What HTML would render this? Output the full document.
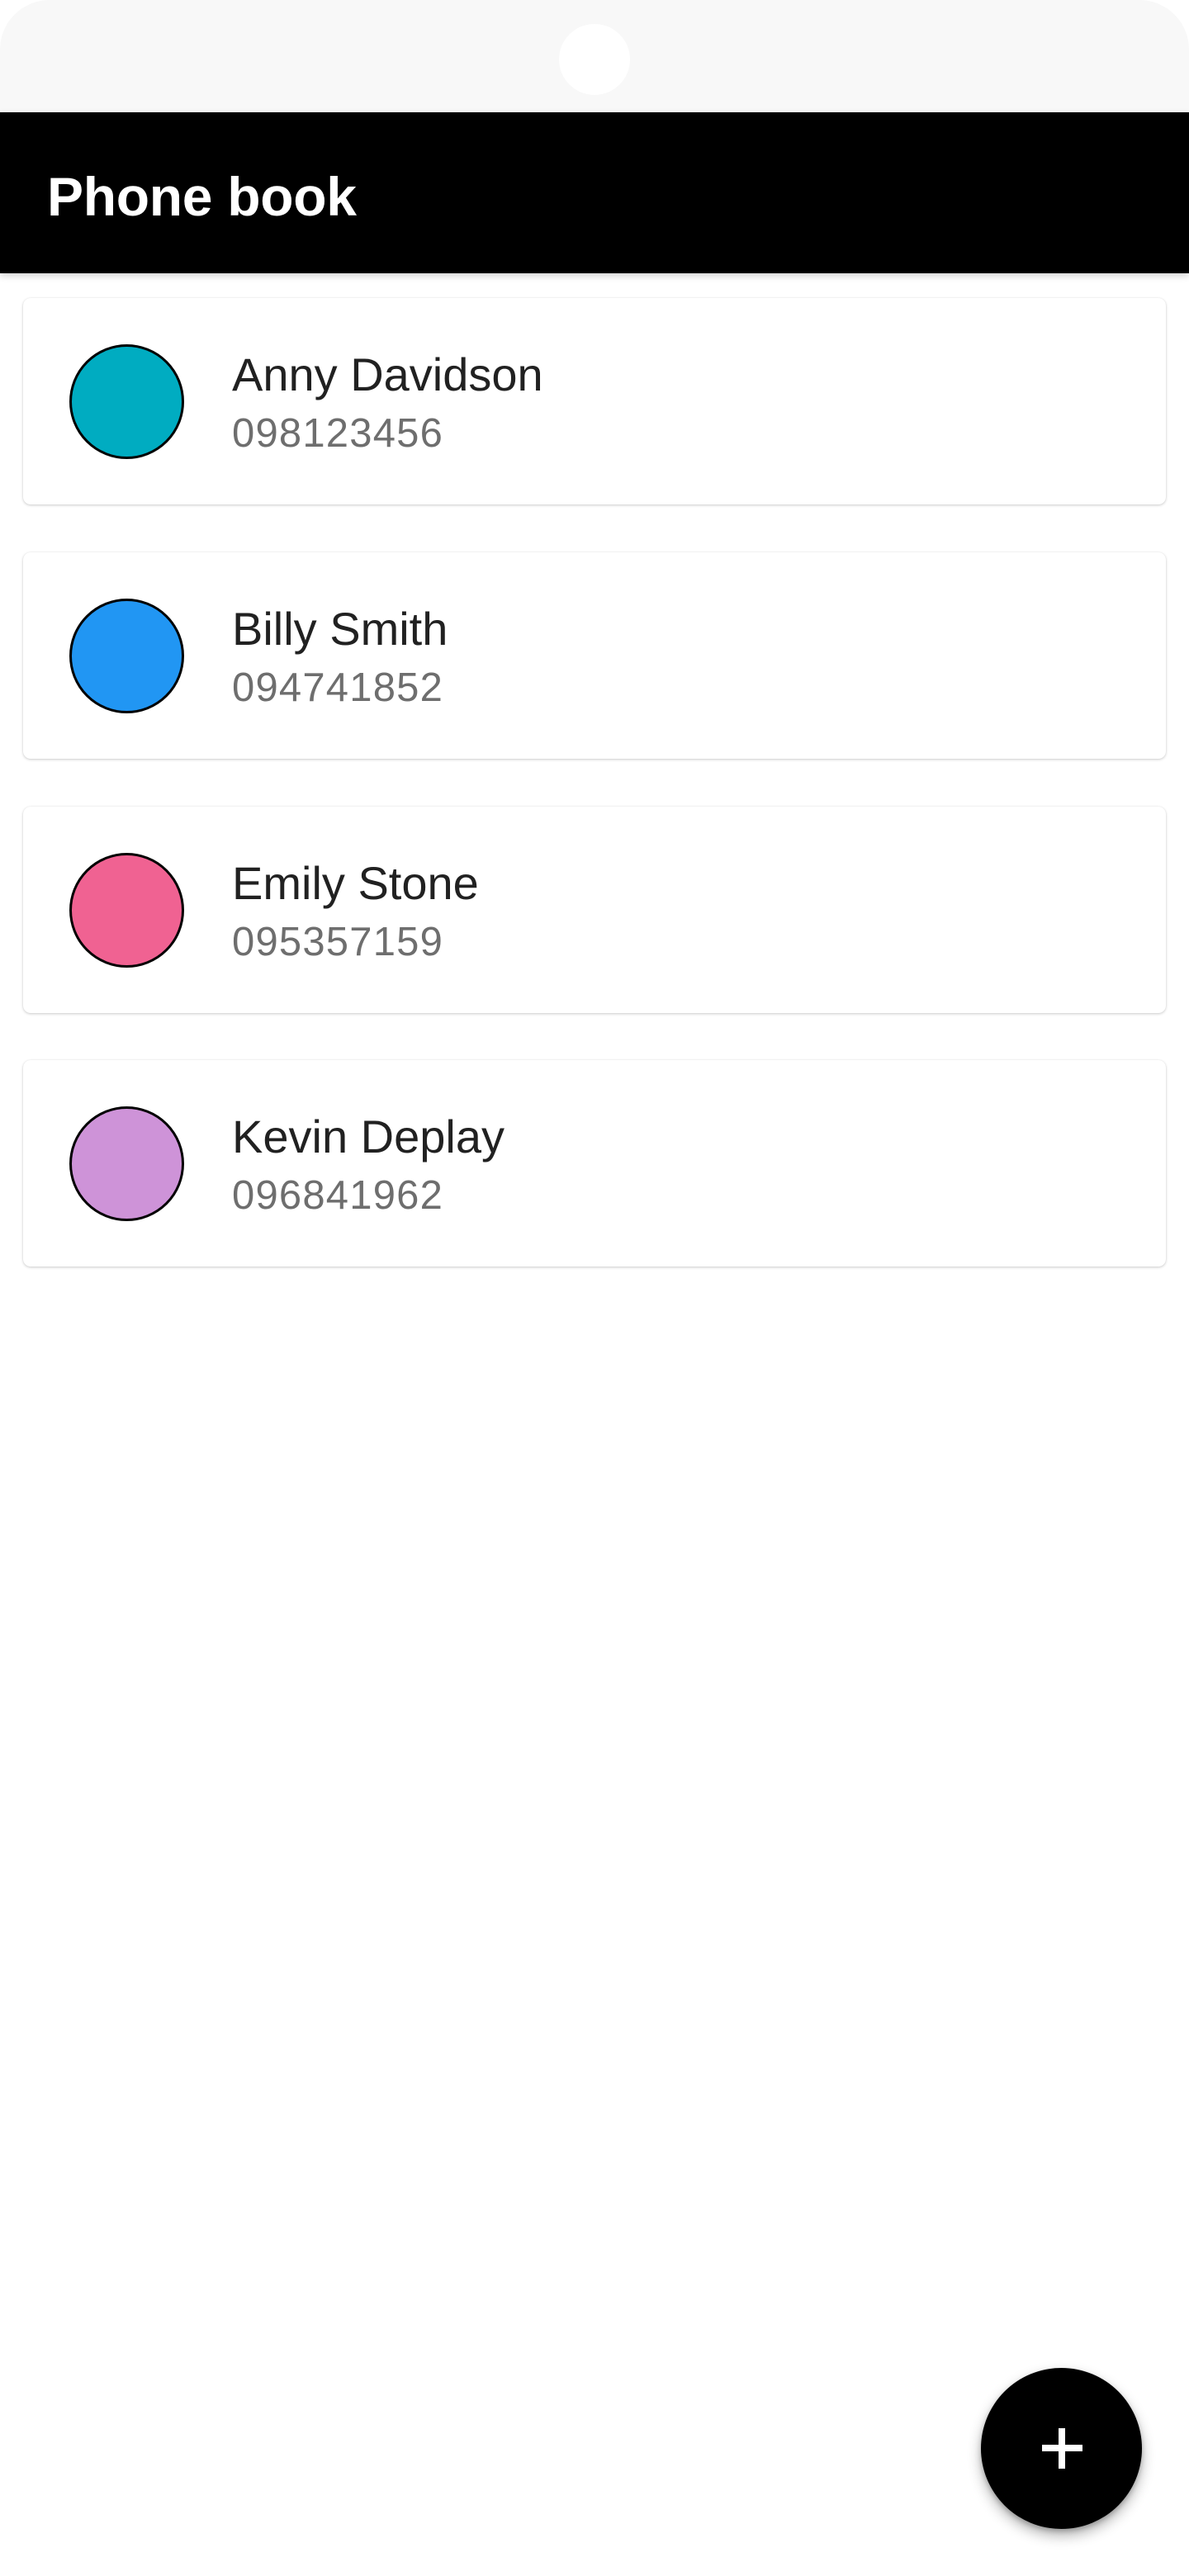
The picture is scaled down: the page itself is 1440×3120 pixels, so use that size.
<!DOCTYPE html>
<html><head><meta charset="utf-8"><style>
*{margin:0;padding:0;box-sizing:border-box}
html,body{width:1440px;height:3120px;background:#fff;overflow:hidden;font-family:"Liberation Sans",Roboto,sans-serif}
.status{position:absolute;left:0;top:0;width:1440px;height:136px;background:#f8f8f8;border-radius:60px 60px 0 0}
.cam{position:absolute;left:677px;top:29px;width:86px;height:86px;border-radius:50%;background:#fff}
.bar{position:absolute;left:0;top:136px;width:1440px;height:195px;background:#000;box-shadow:0 3px 8px rgba(0,0,0,.18)}
.title{position:absolute;left:57px;top:205px;font-size:66px;line-height:66px;color:#fff;font-weight:bold;letter-spacing:-0.3px}
.card{position:absolute;left:28px;width:1384px;height:250px;background:#fff;border-radius:9px;box-shadow:0 1px 3px rgba(0,0,0,.2),0 0 1px rgba(0,0,0,.1)}
.av{position:absolute;left:56px;top:56px;width:139px;height:139px;border-radius:50%;border:3px solid #000}
.name{position:absolute;left:253px;top:65px;font-size:56px;line-height:56px;color:#212121;white-space:nowrap}
.ph{position:absolute;left:253px;top:140px;font-size:49px;line-height:49px;color:#6e6e6e;letter-spacing:1.2px}
.fab{position:absolute;left:1188px;top:2868px;width:195px;height:195px;border-radius:50%;background:#000;box-shadow:0 8px 16px rgba(0,0,0,.3),0 3px 6px rgba(0,0,0,.2)}
.fab:before{content:"";position:absolute;left:74px;top:93px;width:49px;height:8px;background:#fff}
.fab:after{content:"";position:absolute;left:94px;top:73px;width:8px;height:49px;background:#fff}
</style></head><body>
<div class="status"><div class="cam"></div></div>
<div class="bar"></div>
<div class="title">Phone book</div>

<div class="card" style="top:361px"><div class="av" style="background:#00acc1"></div><div class="name">Anny Davidson</div><div class="ph">098123456</div></div>
<div class="card" style="top:669px"><div class="av" style="background:#2196f3"></div><div class="name">Billy Smith</div><div class="ph">094741852</div></div>
<div class="card" style="top:977px"><div class="av" style="background:#f06292"></div><div class="name">Emily Stone</div><div class="ph">095357159</div></div>
<div class="card" style="top:1284px"><div class="av" style="background:#ce93d8"></div><div class="name">Kevin Deplay</div><div class="ph">096841962</div></div>

<div class="fab"></div>
</body></html>
